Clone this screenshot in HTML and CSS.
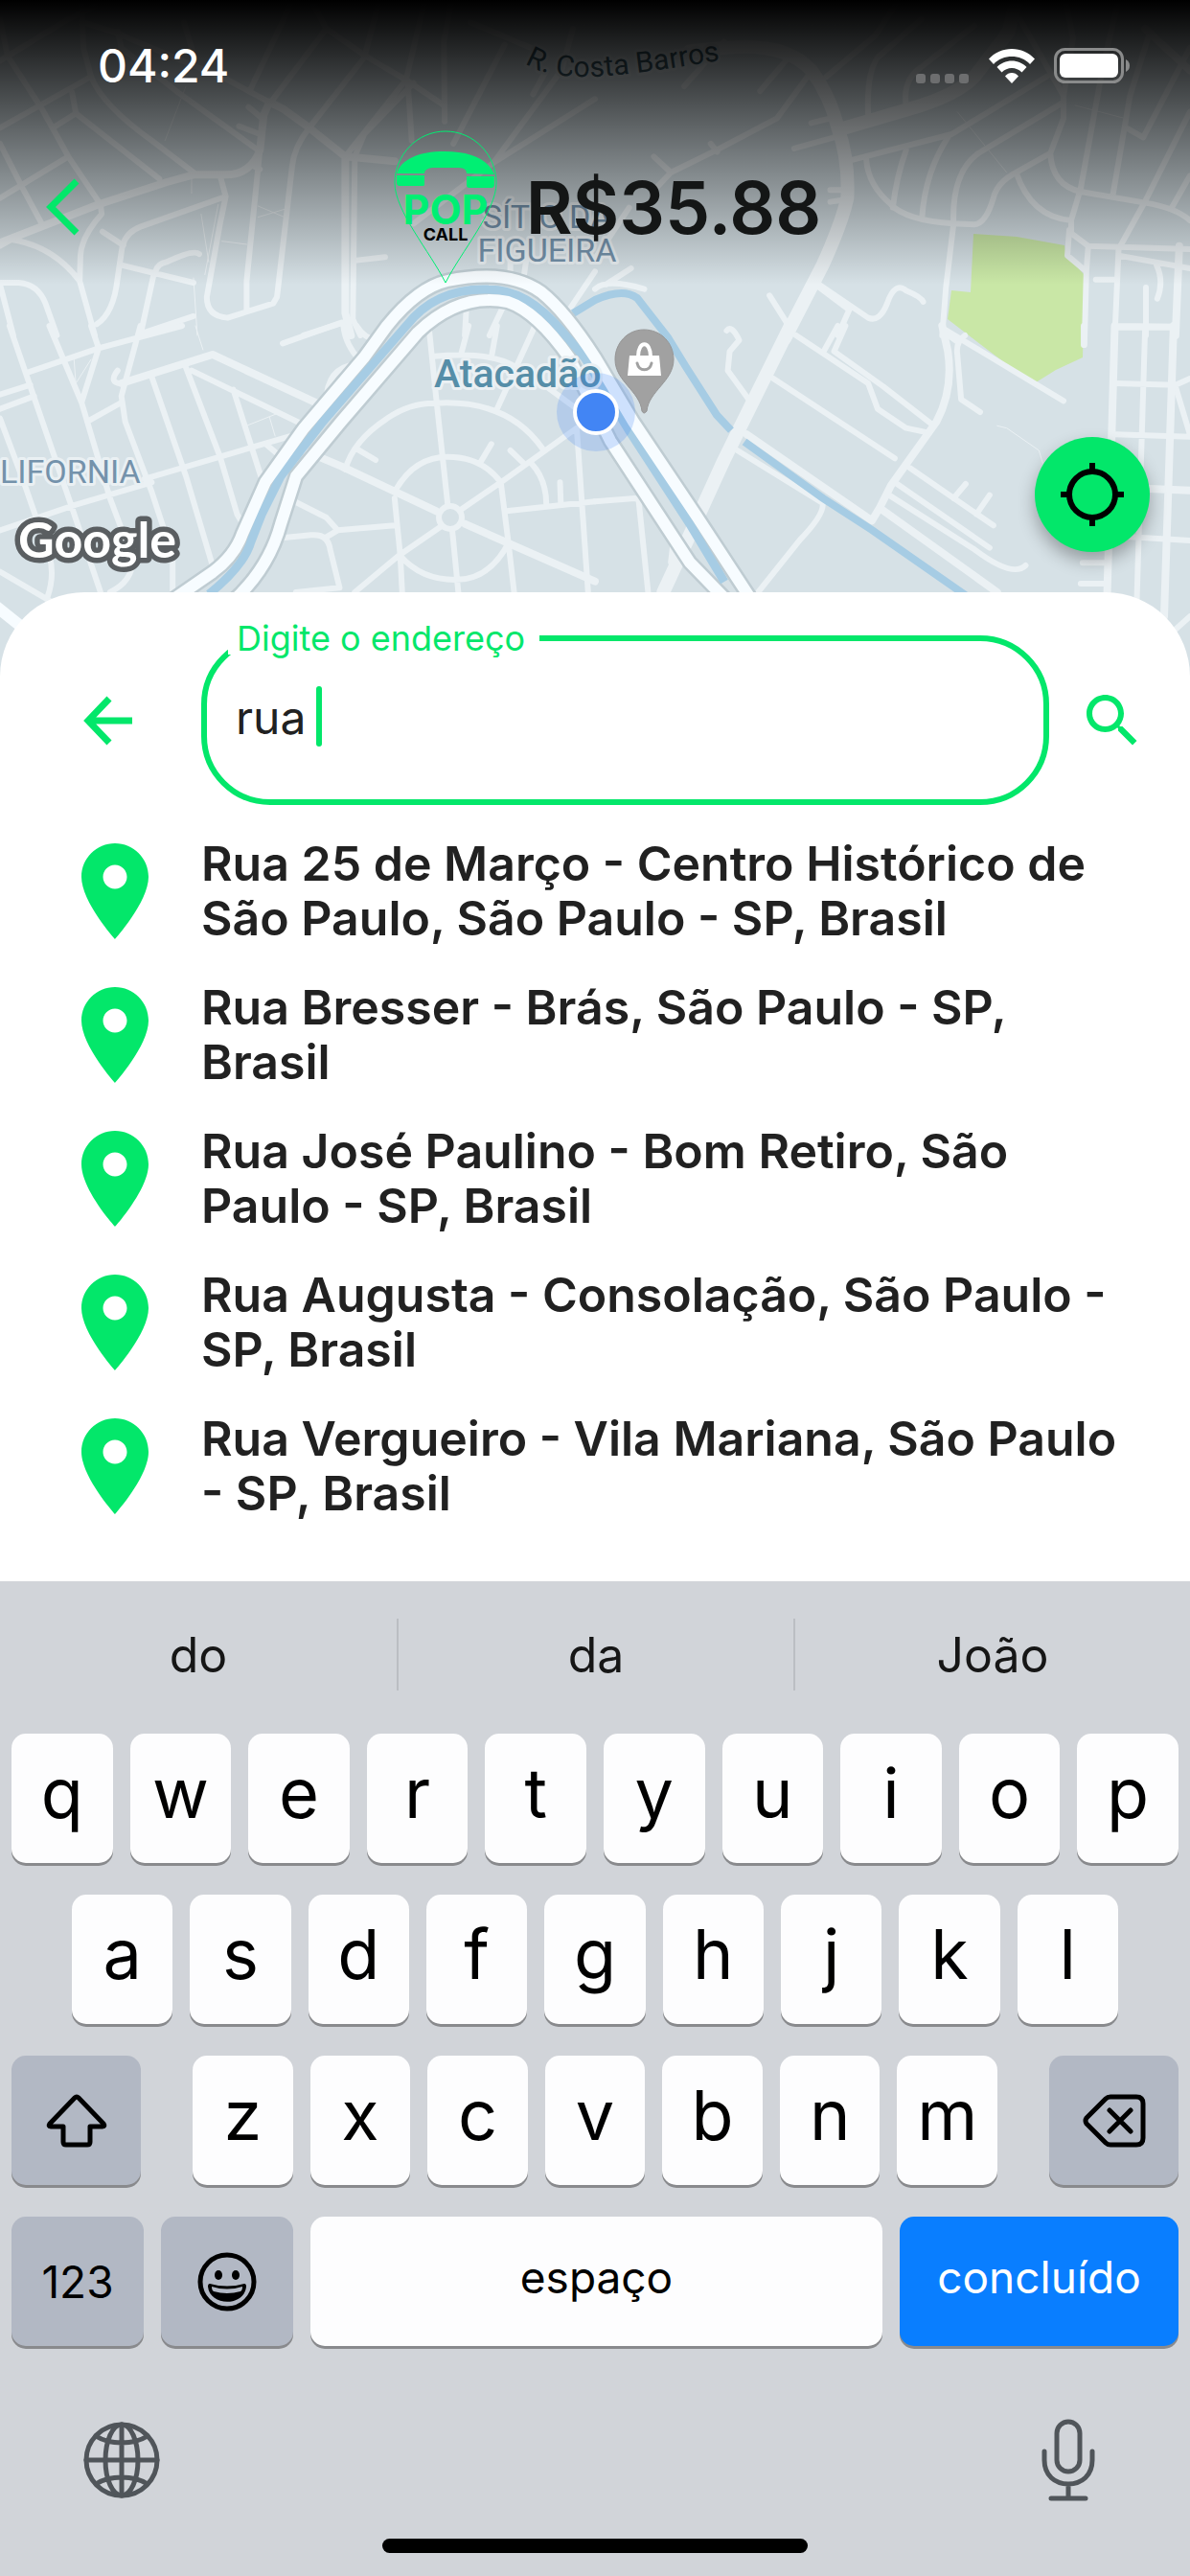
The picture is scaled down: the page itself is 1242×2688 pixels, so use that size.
FILE: index.html
```html
<!DOCTYPE html>
<html lang="pt-BR">
<head>
    <meta charset="UTF-8">
    <meta name="viewport" content="width=device-width, initial-scale=1.0">
    <title>Pop Call</title>
    <link rel="stylesheet" href="styles.css">
</head>
<body>
    <section class="map">
        <svg class="map-canvas" viewBox="0 0 1242 706" preserveAspectRatio="xMidYMin slice" aria-hidden="true">
            <!-- park -->
            <path class="park" d="M1016 244L1061 247L1111 256L1113 267L1132 287L1130 373L1102 386L1078 401L989 333L993 303L1013 305Z"/>

            <!-- north west streets -->
            <g class="streets" transform="scale(.396 .3333)">
                <path d="M0 190L180 60L250 20M20 175L110 340L180 490L265 640M0 60L20 175M0 400L240 240L220 150L215 0M240 240Q270 330 400 440L510 540M190 290L200 355L420 560M200 355L140 400M220 70L300 100L600 250L710 320M310 100L320 150L470 290L680 470M485 70L510 170M660 280L740 80L770 0M720 310L860 90L820 0M860 90L970 180L1070 250L1170 330M815 400L960 180L1000 0M0 450L60 590L110 700M0 620L180 490"/>
                <path d="M580 550L595 615L370 710Q325 730 320 790L310 870Q300 980 255 1015M685 470L650 880L650 970M815 400Q775 460 770 520L730 930L720 950L600 995Q545 990 545 930L580 700L595 615M935 500L930 1000L950 1050M910 490L1070 250L1120 0M935 490L960 420L1090 260M1075 260L1085 440M1172 380L1170 130L1190 0M1195 450L1330 140M1405 295L1440 220M1090 700L1300 510L1568 310M1300 510L1480 220L1510 90M1240 70L1400 150M630 395L685 420M655 335L690 370M660 515L685 530"/>
                <path d="M265 640L268 670Q215 740 212 800L210 880L250 1050M0 770L30 750Q140 770 210 880M0 885H50Q100 890 120 950L150 1050M0 890L35 1050M320 830L510 885M405 860L370 1050M410 850Q415 825 440 820Q510 780 525 795M370 1045L510 990M270 725L325 768M940 815L1015 805M800 1050L930 1000M1230 950L1225 1050M1330 950L1290 1050M1345 870V800M1380 870L1390 790M1500 970L1568 850"/>
                <path class="wide" d="M710 320L745 340L815 400L910 490L1040 505M710 320L695 360L685 470Q660 550 590 547H510L440 570L260 640L0 760M910 490V980L925 1050"/>
                <path class="trail" d="M490 270L435 440M680 645L750 680M680 680L750 655M530 670L550 820M575 640L540 860M510 870L520 1050M505 555V605M585 755L650 765"/>
            </g>

            <!-- north east streets -->
            <g class="streets" transform="translate(621 0) scale(.396 .3333)">
                <path d="M1120 60L1235 300V370L1200 480L1110 540Q1060 570 1050 620Q1030 700 1000 703L945 700Q820 690 780 640Q720 580 715 500M680 500L940 420L1190 240M820 470Q795 550 785 650M930 430Q870 540 862 680M945 700Q940 540 1010 480L1235 320M1200 480Q1205 580 1280 600L1450 635Q1530 650 1568 690M1110 540Q1150 680 1255 690V730L1300 770L1568 780M1255 690L1280 590L1340 200L1380 0M1365 610L1410 300L1460 110M1380 780L1450 630L1568 350M1400 400L1445 430L1568 150M1240 0L1260 120L1235 300M1520 650L1568 550"/>
                <path d="M945 700L925 900L915 1050M1250 720L1245 800L1295 850L1290 1080M1300 770L1295 850M1380 780L1370 1050M1380 800L1568 840M1452 900V1050M1370 1020L1530 1022M1320 875H1375M1480 830Q1500 880 1482 935M580 890L670 970L640 1050M590 890L720 995Q750 1010 770 950Q790 880 820 910Q860 930 865 945M460 925L505 1010M610 240L740 110L800 0M560 240L480 370L320 470L200 540L160 590M155 490L200 540M305 450L322 475M720 360Q715 230 745 180L860 60M820 330Q810 250 860 210L1000 80M235 270L340 130M435 285L510 180M570 385L620 370M525 465L630 430M620 595H660M620 632L660 625M0 905Q30 870 130 905M0 810L90 650M30 890L95 840"/>
                <path class="wide" d="M1540 770L1530 1050M1450 90L1568 220"/>
                <path class="avenue" d="M250 160L340 150Q500 130 570 220Q620 300 640 400Q670 500 665 620Q650 700 600 830L500 1060"/>
                <path class="avenue" d="M645 405L860 330Q960 290 1000 240L1090 100L1110 0"/>
                <path class="trail" d="M955 350L1085 540M1265 330L1395 370"/>
            </g>

            <!-- south west streets -->
            <g class="streets" transform="translate(0 340) scale(.396 .3333)">
                <path d="M25 0L190 570L265 834M130 0L215 240L290 540L350 730Q350 800 290 834M240 0L260 70L215 240M370 0L320 220L330 300L400 520L455 720V834M400 160L490 470L565 770M490 130L580 410L625 590L640 620M615 200L690 480M0 290L60 480L130 720Q145 780 125 850M75 145L260 70L480 0M0 215L80 185M0 260L90 220M505 140L800 310L790 340M230 300L320 240M310 140Q285 180 320 180M0 640L200 560L400 490M380 480L780 340M700 370L770 440M0 770L130 860"/>
                <path d="M1040 520Q1090 410 1180 410T1320 490L1340 680Q1290 795 1200 795T1055 720L1040 540M910 450Q930 360 1020 290Q1080 240 1150 242Q1340 230 1430 385M1180 560L1150 230L1130 0M1215 575L1320 490L1520 320M1192 640L1208 834M1160 630L1050 720L935 834M760 540L860 600L890 640L1040 625M730 665L820 655Q865 650 870 700L895 820L780 834M855 665L890 640M1055 720L1060 834M1340 680L1355 834M1335 580L1568 550M1400 430Q1440 480 1440 560M1476 490L1478 555M1520 320L1550 834M1145 95Q1300 80 1360 130M1235 0L1215 90M1310 0L1295 100M1410 0L1310 260M1440 190L1520 260M940 385L990 420M1295 370L1265 430M1345 390L1380 430M745 55L900 -10M860 240Q860 130 940 120M905 0Q910 60 950 110M940 0Q960 40 1000 50"/>
                <path class="wide" d="M320 180L560 90L850 250M780 380L900 440L1150 580M760 420L800 450M1225 620L1568 800"/>
                <path class="trail" d="M195 105L200 180L240 105M645 315L730 275M710 285L725 345M515 0L535 75"/>
            </g>

            <!-- south east streets -->
            <g class="streets" transform="translate(621 340) scale(.396 .3333)">
                <path d="M530 30L720 180L745 260L820 320L880 335M660 0L630 80L760 190L890 310M640 0L605 75M470 165L790 415M375 390L600 555Q605 590 540 670L430 834M830 445L1050 625M945 540L977 495M1005 590L1040 530M790 490L1040 695M775 530L1000 700Q1100 790 1135 750M920 10L1235 235M975 30Q950 50 955 90L965 230L1015 270M405 230L350 140L355 80L380 45Q360 -5 347 15M920 20L955 50M0 550L105 540L115 545L140 834M180 430L235 510M190 620L205 690L200 740M1450 0L1428 860M1370 180L1530 185M1370 340L1568 347M1400 660L1568 672M1285 742H1350M1280 807H1350M1530 190L1568 340M1530 185L1568 165M1370 5H1525M1288 0V60M1530 950L1568 910"/>
                <path class="wide" d="M400 340L730 610L750 570L780 500L900 300Q945 200 930 80L915 0M750 570L1060 834M1370 0L1350 834M1525 0L1500 910M1460 510L1568 515"/>
                <path class="avenue" d="M515 0L340 420L240 680L180 834"/>
                <path class="trail" d="M1060 313L1085 320L1170 390L1180 430"/>
            </g>
            <circle class="roundabout" cx="470" cy="540" r="12"/>

            <!-- rivers and expressway -->
            <path class="stream" d="M598 327L621 313Q650 300 665 311L697 352L716 383L748 433L763 449M777 461L859 520L910 553L1009 622"/>
            <g class="expressway">
                <path class="edge" d="M180 626L222 597Q245 580 253 557L277 503L317 447L380 373L404 340Q436 300 467 293Q530 280 565 305Q590 325 621 373L661 440L728 540L783 624M240 630Q280 595 293 547L309 497L356 440L436 347Q480 305 530 315Q560 325 594 373L637 460L720 587L756 624"/>
                <path class="river" d="M218 620Q255 590 262 565L273 537L293 497L337 440L424 340Q455 300 510 302Q550 302 586 345L610 373L657 450L720 547L756 607"/>
                <path class="lane" d="M180 626L222 597Q245 580 253 557L277 503L317 447L380 373L404 340Q436 300 467 293Q530 280 565 305Q590 325 621 373L661 440L728 540L783 624M240 630Q280 595 293 547L309 497L356 440L436 347Q480 305 530 315Q560 325 594 373L637 460L720 587L756 624"/>
                <path class="lane" d="M-5 632L30 660"/>
            </g>

            <!-- labels -->
            <path id="street-curve" fill="none" d="M548 66Q572 82 620 80T780 58"/>
            <text class="label street"><textPath href="#street-curve">R. Costa Barros</textPath></text>
            <text class="label district" x="571" y="238" text-anchor="middle">SÍTIO DA</text>
            <text class="label district" x="571" y="273" text-anchor="middle">FIGUEIRA</text>
            <text class="label district" x="0" y="504">LIFORNIA</text>
            <text class="label place" x="453" y="404">Atacadão</text>
            <text class="label google" x="19" y="582">Google</text>

            <!-- shop pin -->
            <path class="shop-pin" d="M672 344C655 344 642 358 642 375C642 398 668 408 670 429Q672 433 675 429C677 408 703 398 703 375C703 358 690 344 672 344Z"/>
            <path class="bag" d="M657 371H688L690 392H655Z"/>
            <path class="bag-handle" d="M666 372C666 355 679 355 679 372"/>
            <path class="bag-smile" d="M665 379C667 388 678 388 680 379"/>

            <!-- current position -->
            <circle class="halo" cx="622" cy="430" r="41"/>
            <circle class="position" cx="622" cy="430" r="22"/>
        </svg>
        <div class="shade"></div>

        <div class="status-bar">
            <span class="clock">04:24</span>
            <div class="status-icons">
                <svg class="dots" viewBox="0 0 56 10" aria-hidden="true">
                    <rect width="10" height="10" rx="3"/><rect x="15" width="10" height="10" rx="3"/><rect x="30" width="10" height="10" rx="3"/><rect x="45" width="10" height="10" rx="3"/>
                </svg>
                <svg class="wifi" viewBox="0 0 48 36" aria-hidden="true">
                    <path d="M24 0C15 0 6 4 0 10.500L5 16C10 10.500 17 8 24 8S38 10.500 43 16L48 10.500C42 4 33 0 24 0Z"/>
                    <path d="M24 12.500C18 12.500 12.500 15 8.500 19L13.500 24.500C16.500 21.500 20 20 24 20S31.500 21.500 34.500 24.500L39.500 19C35.500 15 30 12.500 24 12.500Z"/>
                    <path d="M24 25C21.500 25 19 26 17 28.500L24 36L31 28.500C29 26 26.500 25 24 25Z"/>
                </svg>
                <svg class="battery" viewBox="0 0 80 37" aria-hidden="true">
                    <rect class="battery-case" x="1.500" y="1.500" width="70" height="34" rx="10"/>
                    <rect x="6" y="6" width="61" height="25" rx="6"/>
                    <path class="battery-tip" d="M75 12Q79 14 79 18.500T75 25Z"/>
                </svg>
            </div>
        </div>

        <header class="top-bar">
            <button class="icon-btn" type="button" aria-label="Voltar">
                <svg width="36" height="60" viewBox="0 0 36 60"><path class="line" d="M32 3L5 30L32 57"/></svg>
            </button>
            <div class="brand">
                <svg class="logo" viewBox="0 0 108 160" role="img" aria-label="Pop Call">
                    <path class="logo-pin" d="M54 1C24 1 1 26 1 55C1 84 38 127 54 159C70 127 107 84 107 55C107 26 84 1 54 1Z"/>
                    <path class="logo-phone" d="M3 45C8 30 26 22 53 22S98 30 105 46L76 45Q76 39 68 39H40Q32 40 32 45Z"/>
                    <path class="logo-phone" d="M3 47H32V57Q32 58 30 58H6Q3 58 3 54ZM76 48H105V56Q105 60 102 60H79Q76 60 76 57Z"/>
                    <text class="logo-pop" x="54" y="98" text-anchor="middle">POP</text>
                    <text class="logo-call" x="54" y="115" text-anchor="middle">CALL</text>
                </svg>
                <span class="price">R$35.88</span>
            </div>
        </header>

        <button class="locate" type="button" aria-label="Minha localização">
            <svg width="68" height="68" viewBox="0 0 68 68"><circle cx="34" cy="34" r="24"/><path d="M34 1V10M34 58V67M1 34H10M58 34H67"/></svg>
        </button>
    </section>

    <main class="sheet">
        <form class="search">
            <button class="icon-btn search-back" type="button" aria-label="Voltar">
                <svg width="52" height="52" viewBox="0 0 52 52"><path class="line" d="M27 3L5 26L27 49M5 26H51"/></svg>
            </button>
            <fieldset class="field">
                <legend><label for="address">Digite o endereço</label></legend>
                <input id="address" type="text" value="rua " autocomplete="off">
                <span class="caret"></span>
            </fieldset>
            <button class="icon-btn search-go" type="submit" aria-label="Buscar">
                <svg width="72" height="72" viewBox="0 0 24 24"><path fill="currentColor" d="M15.500 14h-.790l-.280-.270C15.410 12.590 16 11.110 16 9.500 16 5.910 13.090 3 9.500 3S3 5.910 3 9.500 5.910 16 9.500 16c1.610 0 3.090-.590 4.230-1.570l.270.280v.790l5 4.990L20.490 19l-4.990-5zm-6 0C7.010 14 5 11.990 5 9.500S7.010 5 9.500 5 14 7.010 14 9.500 11.990 14 9.500 14z"/></svg>
            </button>
        </form>

        <svg class="symbols" aria-hidden="true">
            <symbol id="pin" viewBox="0 0 24 24"><path d="M12 2C8.130 2 5 5.130 5 9c0 5.250 7 13 7 13s7-7.750 7-13c0-3.870-3.130-7-7-7zm0 9.500c-1.380 0-2.500-1.120-2.500-2.500s1.120-2.500 2.500-2.500 2.500 1.120 2.500 2.500-1.120 2.500-2.500 2.500z"/></symbol>
        </svg>
        <ul class="results">
            <li><a class="result" href="#"><svg class="pin"><use href="#pin"/></svg><span>Rua 25 de Março - Centro Histórico de São Paulo, São Paulo - SP, Brasil</span></a></li>
            <li><a class="result" href="#"><svg class="pin"><use href="#pin"/></svg><span>Rua Bresser - Brás, São Paulo - SP, Brasil</span></a></li>
            <li><a class="result" href="#"><svg class="pin"><use href="#pin"/></svg><span>Rua José Paulino - Bom Retiro, São Paulo - SP, Brasil</span></a></li>
            <li><a class="result" href="#"><svg class="pin"><use href="#pin"/></svg><span>Rua Augusta - Consolação, São Paulo - SP, Brasil</span></a></li>
            <li><a class="result" href="#"><svg class="pin"><use href="#pin"/></svg><span>Rua Vergueiro - Vila Mariana, São Paulo - SP, Brasil</span></a></li>
        </ul>
    </main>

    <section class="keyboard">
        <div class="suggestions">
            <button type="button">do</button>
            <button type="button">da</button>
            <button type="button">João</button>
        </div>
        <div class="keys">
            <div class="row">
                <button class="key" type="button">q</button>
                <button class="key" type="button">w</button>
                <button class="key" type="button">e</button>
                <button class="key" type="button">r</button>
                <button class="key" type="button">t</button>
                <button class="key" type="button">y</button>
                <button class="key" type="button">u</button>
                <button class="key" type="button">i</button>
                <button class="key" type="button">o</button>
                <button class="key" type="button">p</button>
            </div>
            <div class="row row-inset">
                <button class="key" type="button">a</button>
                <button class="key" type="button">s</button>
                <button class="key" type="button">d</button>
                <button class="key" type="button">f</button>
                <button class="key" type="button">g</button>
                <button class="key" type="button">h</button>
                <button class="key" type="button">j</button>
                <button class="key" type="button">k</button>
                <button class="key" type="button">l</button>
            </div>
            <div class="row row-shift">
                <button class="key special" type="button" aria-label="Shift">
                    <svg width="64" height="56" viewBox="0 0 64 56"><path d="M32 3Q33 3 34 4L60 31Q62 34 59 34H46V50Q46 53 43 53H21Q18 53 18 50V34H5Q2 34 4 31L30 4Q31 3 32 3Z"/></svg>
                </button>
                <div class="row letters">
                    <button class="key" type="button">z</button>
                    <button class="key" type="button">x</button>
                    <button class="key" type="button">c</button>
                    <button class="key" type="button">v</button>
                    <button class="key" type="button">b</button>
                    <button class="key" type="button">n</button>
                    <button class="key" type="button">m</button>
                </div>
                <button class="key special" type="button" aria-label="Apagar">
                    <svg width="66" height="56" viewBox="0 0 66 56"><path d="M29 3H56Q63 3 63 10V46Q63 53 56 53H29Q26 53 24 51L4 31Q2 28 4 25L24 5Q26 3 29 3ZM28 17L50 39M50 17L28 39"/></svg>
                </button>
            </div>
            <div class="row row-space">
                <button class="key special word" type="button">123</button>
                <button class="key special" type="button" aria-label="Emoji">
                    <svg width="62" height="62" viewBox="0 0 62 62"><circle cx="31" cy="31" r="28"/><g class="solid"><ellipse cx="22" cy="24" rx="4" ry="5"/><ellipse cx="40" cy="24" rx="4" ry="5"/><path fill-rule="evenodd" d="M13 33Q31 38 49 33Q51 33 51 36C49 57 13 57 11 36Q11 33 13 33ZM15 36Q15 40 17 41Q31 45 45 41Q47 40 47 36Q31 41 15 36Z"/></g></svg>
                </button>
                <button class="key word lowered" type="button">espaço</button>
                <button class="key word lowered done" type="button">concluído</button>
            </div>
        </div>
        <div class="tools">
            <button class="tool" type="button" aria-label="Trocar teclado">
                <svg width="80" height="80" viewBox="0 0 80 80"><circle cx="40" cy="40" r="37"/><ellipse cx="40" cy="40" rx="17" ry="37"/><path d="M40 3V77M3 40H77M13 15Q24 22 40 22T67 15M13 65Q24 58 40 58T67 65"/></svg>
            </button>
            <button class="tool" type="button" aria-label="Ditar">
                <svg width="80" height="88" viewBox="0 0 80 88"><rect x="28" y="4" width="24" height="52" rx="12"/><path d="M15 35V44C15 60 26 69 40 69S65 60 65 44V35M40 69V84M22 84H58"/></svg>
            </button>
        </div>
        <div class="home-bar"></div>
    </section>
</body>
</html>
```

FILE: styles.css
```css
* {
    box-sizing: border-box;
}
body {
    margin: 0;
    background-color: #d1d4d9;
    color: #212121;
    font-family: Inter, 'Liberation Sans', sans-serif;
}
button {
    border: none;
    padding: 0;
    background: none;
    color: inherit;
    font-family: inherit;
    cursor: pointer;
}
svg {
    display: block;
}

/* map */
.map {
    position: relative;
    height: 706px;
    overflow: hidden;
    background-color: #d6e1e6;
}
.map-canvas {
    position: absolute;
    top: 0;
    left: 0;
    width: 100%;
    height: 100%;
}
.shade {
    position: absolute;
    top: 0;
    left: 0;
    right: 0;
    height: 297px;
    background: linear-gradient(#000, rgba(0, 0, 0, 0));
}
.park {
    fill: #c9e7a6;
}
.streets path {
    fill: none;
    stroke: #ebf1f4;
    stroke-width: 6;
    stroke-linecap: round;
    stroke-linejoin: round;
    vector-effect: non-scaling-stroke;
}
.streets .wide {
    stroke-width: 8;
}
.streets .avenue {
    stroke-width: 14;
}
.streets .trail {
    stroke-width: 1;
}
.roundabout {
    fill: #d6e1e6;
    stroke: #ebf1f4;
    stroke-width: 6;
}
.stream {
    fill: none;
    stroke: #a6cce4;
    stroke-width: 8;
}
.expressway path {
    fill: none;
}
.expressway .edge {
    stroke: #bfccd2;
    stroke-width: 17;
}
.expressway .lane {
    stroke: #f7fcff;
    stroke-width: 12;
}
.expressway .river {
    stroke: #a6cce4;
    stroke-width: 9;
}
.label {
    font-family: Roboto, 'Liberation Sans', sans-serif;
    stroke: #eaf0f3;
    stroke-width: 6px;
    stroke-linejoin: round;
    paint-order: stroke;
}
.street {
    font-size: 30px;
    fill: #3c5a66;
    stroke: #dfe8ec;
}
.district {
    font-size: 34px;
    fill: #7492ab;
}
.place {
    font-size: 41px;
    font-weight: 500;
    fill: #568ea8;
}
.google {
    font-family: Lato, sans-serif;
    font-size: 52px;
    font-weight: 700;
    fill: #fff;
    stroke: #5a5e61;
    stroke-width: 11px;
}
.shop-pin {
    fill: #a1a1a1;
    stroke: #969696;
}
.bag {
    fill: #fff;
}
.bag-handle {
    fill: none;
    stroke: #fff;
    stroke-width: 4;
}
.bag-smile {
    fill: none;
    stroke: #a1a1a1;
    stroke-width: 3;
    stroke-linecap: round;
}
.halo {
    fill: rgba(66, 133, 244, 0.22);
}
.position {
    fill: #4285f4;
    stroke: #fff;
    stroke-width: 4;
}

/* status bar */
.status-bar {
    position: relative;
    display: flex;
    justify-content: space-between;
    align-items: center;
    height: 136px;
    padding: 0 62px 0 102px;
    color: #fff;
}
.clock {
    font-size: 48px;
    font-weight: 500;
}
.status-icons {
    display: flex;
    align-items: flex-end;
    gap: 20px;
    fill: #fff;
}
.dots {
    width: 56px;
    height: 10px;
    fill: #6d6e6f;
}
.wifi {
    width: 48px;
    height: 36px;
}
.battery {
    width: 80px;
    height: 37px;
}
.battery-case {
    fill: none;
    stroke: #8a8b8b;
    stroke-width: 3;
}
.battery-tip {
    fill: #8a8b8b;
}

/* top bar */
.top-bar {
    position: relative;
    display: flex;
    align-items: center;
    height: 160px;
    padding: 0 58px 0 48px;
}
.brand {
    display: flex;
    align-items: center;
    gap: 30px;
    margin: 0 auto;
}
.logo {
    width: 108px;
    height: 160px;
}
.logo-pin {
    fill: none;
    stroke: #00ef73;
}
.logo-phone,
.logo-pop {
    fill: #00ef73;
}
.logo-pop {
    font-size: 43px;
    font-weight: 700;
}
.logo-call {
    font-size: 18px;
    font-weight: 700;
}
.price {
    color: #141616;
    font-size: 75px;
    font-weight: 600;
}
.icon-btn {
    display: flex;
    align-items: center;
    justify-content: center;
    color: #03e76a;
}
.line {
    fill: none;
    stroke: currentColor;
    stroke-width: 7;
}
.locate {
    position: absolute;
    right: 42px;
    bottom: 130px;
    display: flex;
    align-items: center;
    justify-content: center;
    width: 120px;
    height: 120px;
    border-radius: 50%;
    background-color: #03e76a;
    box-shadow: 0 9px 18px rgba(0, 0, 0, 0.3);
}
.locate svg {
    fill: none;
    stroke: #000;
    stroke-width: 6;
}

/* search sheet */
.sheet {
    position: relative;
    margin-top: -88px;
    padding: 31px 45px 45px 60px;
    border-radius: 88px 88px 0 0;
    background-color: #fff;
}
.search {
    display: flex;
    align-items: flex-end;
    gap: 30px;
}
.search-back {
    width: 120px;
    height: 177px;
    padding-right: 15px;
}
.search-go {
    width: 72px;
    height: 177px;
}
.field {
    position: relative;
    flex: 1;
    min-width: 0;
    margin: 0;
    padding: 0;
    border: 6px solid #03e76a;
    border-radius: 72px;
}
.field legend {
    height: 34px;
    margin-left: 22px;
    padding: 0 15px 0 9px;
    color: #03e76a;
    font-size: 36px;
    line-height: 34px;
}
.field input {
    display: block;
    width: 100%;
    height: 151px;
    padding: 0 30px 21px;
    border: none;
    outline: none;
    background: none;
    color: #212121;
    font-family: inherit;
    font-size: 48px;
}
.caret {
    position: absolute;
    top: 33px;
    left: 114px;
    width: 6px;
    height: 63px;
    border-radius: 3px;
    background-color: #03e76a;
}
.symbols {
    position: absolute;
    width: 0;
    height: 0;
}
.results {
    margin: 15px 0 0;
    padding: 0 15px 0 0;
    list-style: none;
}
.result {
    display: flex;
    align-items: center;
    gap: 30px;
    min-height: 150px;
    color: #212121;
    font-size: 50px;
    font-weight: 600;
    line-height: 57px;
    text-decoration: none;
}
.pin {
    flex: none;
    width: 120px;
    height: 120px;
    fill: #03e76a;
}

/* keyboard */
.keyboard {
    background-color: #d1d4d9;
    padding-bottom: 24px;
}
.suggestions {
    display: grid;
    grid-template-columns: repeat(3, 1fr);
    padding: 39px 0 45px;
}
.suggestions button {
    height: 75px;
    color: #161616;
    font-size: 50px;
}
.suggestions button + button {
    border-left: 2px solid #bbbec3;
}
.keys {
    display: flex;
    flex-direction: column;
    gap: 33px;
    padding: 0 12px;
}
.row {
    display: flex;
    gap: 18px;
}
.row-inset {
    padding: 0 63px;
}
.row-shift {
    gap: 54px;
}
.row-shift .special {
    flex: none;
    width: 135px;
}
.letters {
    flex: 1;
}
.row-space {
    display: grid;
    grid-template-columns: 138px 138px 1fr 291px;
}
.key {
    display: flex;
    flex: 1;
    align-items: center;
    justify-content: center;
    height: 135px;
    padding-bottom: 12px;
    border-radius: 15px;
    background-color: #fdfdfe;
    box-shadow: 0 3px 0 #898a8d;
    color: #000;
    font-size: 72px;
}
.key svg {
    fill: none;
    stroke: #000;
    stroke-width: 5;
    stroke-linecap: round;
    stroke-linejoin: round;
}
.key .solid {
    fill: #000;
    stroke: none;
}
.special {
    padding-bottom: 0;
    background-color: #b2b8c4;
}
.word {
    font-size: 46px;
}
.lowered {
    padding-bottom: 9px;
}
.done {
    background-color: #097eff;
    color: #fff;
}
.tools {
    display: flex;
    align-items: center;
    justify-content: space-between;
    height: 201px;
    padding: 36px 87px 0;
}
.tool svg {
    fill: none;
    stroke: #50555a;
    stroke-width: 5;
    stroke-linecap: round;
}
.home-bar {
    width: 444px;
    height: 15px;
    margin: 0 auto;
    border-radius: 8px;
    background-color: #000;
}
```
